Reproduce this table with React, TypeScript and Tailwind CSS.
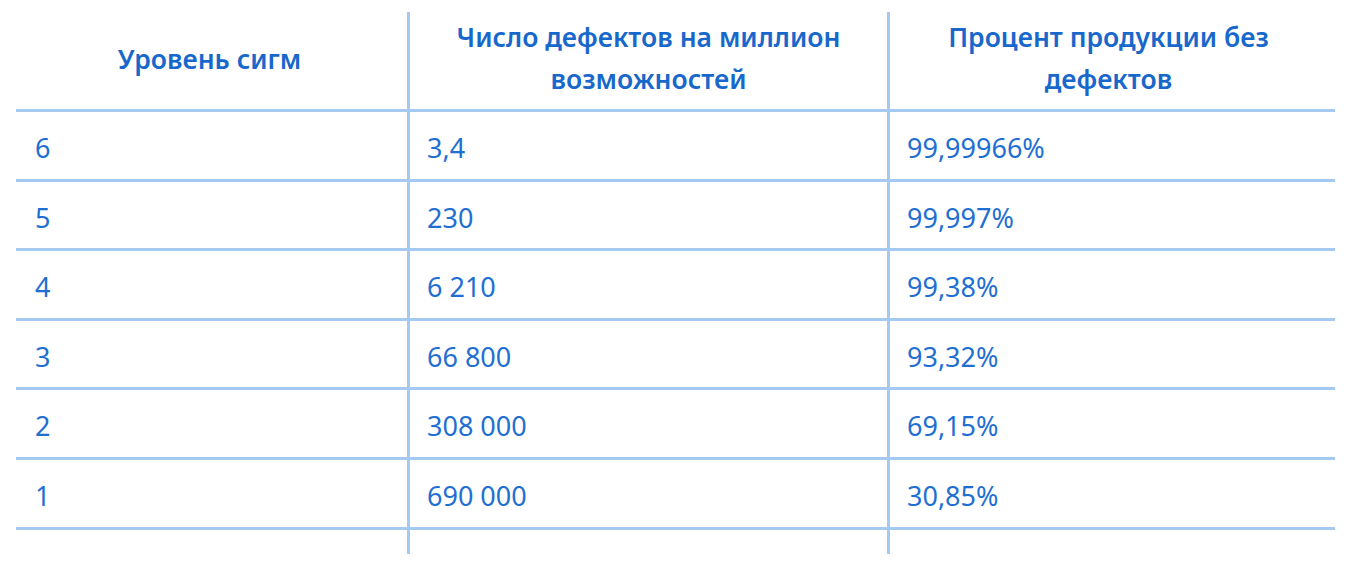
const rows = [
  ["6", "3,4", "99,99966%"],
  ["5", "230", "99,997%"],
  ["4", "6 210", "99,38%"],
  ["3", "66 800", "93,32%"],
  ["2", "308 000", "69,15%"],
  ["1", "690 000", "30,85%"],
]

const font = { fontFamily: '"Noto Sans", "DejaVu Sans", sans-serif' }

export default function App() {
  return (
    <div className="w-[1352px] h-[566px] bg-white overflow-hidden" style={font}>
      <div className="ml-[16px] mt-[12px] grid grid-cols-[391px_480px_448px]">
        {/* header */}
        <div className="h-[100px] border-b-[3px] border-[#a4caf2] flex items-center justify-center pb-[4px] pr-[4px] text-[26.5px] font-semibold text-[#1868cc] leading-[42px]">
          Уровень сигм
        </div>
        <div className="h-[100px] border-b-[3px] border-l-[3px] border-[#a4caf2] flex items-center justify-center text-center pb-[6px] text-[26.5px] font-semibold text-[#1868cc] leading-[42px]">
          <span>
            Число дефектов на миллион
            <br />
            возможностей
          </span>
        </div>
        <div className="h-[100px] border-b-[3px] border-l-[3px] border-[#a4caf2] flex items-center justify-center text-center pb-[6px] pr-[8px] text-[26.5px] font-semibold text-[#1868cc] leading-[42px]">
          <span>
            Процент продукции без
            <br />
            дефектов
          </span>
        </div>

        {rows.map((r, i) => (
          <div key={i} className="contents">
            <div className="h-[69.6px] border-b-[3px] border-[#a4caf2] flex items-center pt-[6px] pl-[19px] text-[27px] text-[#1f6fd2]">
              {r[0]}
            </div>
            <div className="h-[69.6px] border-b-[3px] border-l-[3px] border-[#a4caf2] flex items-center pt-[6px] pl-[17px] text-[27px] text-[#1f6fd2]">
              {r[1]}
            </div>
            <div className="h-[69.6px] border-b-[3px] border-l-[3px] border-[#a4caf2] flex items-center pt-[6px] pl-[17px] text-[27px] text-[#1f6fd2]">
              {r[2]}
            </div>
          </div>
        ))}

        {/* tail of the vertical rules */}
        <div className="h-[24px]" />
        <div className="h-[24px] border-l-[3px] border-[#a4caf2]" />
        <div className="h-[24px] border-l-[3px] border-[#a4caf2]" />
      </div>
    </div>
  )
}
